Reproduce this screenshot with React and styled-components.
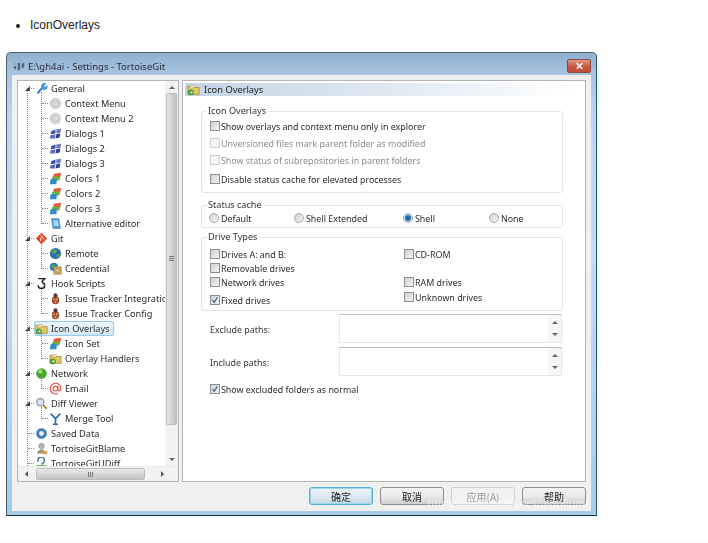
import styled, { createGlobalStyle } from "styled-components";

const GlobalStyle = createGlobalStyle`
    html, body {
        margin: 0;
        background: #ffffff;
    }
`

const UI_FONT = `"Noto Sans", Tahoma, sans-serif`;
const CJK_FONT = `"Noto Sans CJK SC", "Liberation Sans", sans-serif`;

function Icon({ name }) {
    const shapes = {
        wrench: <>
            <path d="M3 14 L9 7" stroke="#2f7fd0" strokeWidth="2.6" />
            <path d="M8 7 A4 4 0 0 1 14 2 L11 5 L12 6 L15 4 A4 4 0 0 1 9 9 Z" fill="#3f9ae6" />
        </>,
        gear: <>
            <circle cx="8" cy="8" r="6.5" fill="#dcdcdc" stroke="#a9a9a9" strokeDasharray="2 1" />
            <circle cx="8" cy="8" r="3.5" fill="#f4f4f4" stroke="#a0a0a0" />
            <circle cx="8" cy="8" r="1.4" fill="#c4c4c4" />
        </>,
        windows: <>
            <path d="M3 5 L8 3 L8 8 L2 9 Z" fill="#3d4fa8" />
            <path d="M9 3 L15 2 L14 7 L9 8 Z" fill="#6a76c6" />
            <path d="M2 10 L8 9 L7 14 L1 14 Z" fill="#5a68bc" />
            <path d="M9 9 L14 8 L13 13 L8 14 Z" fill="#2e3d92" />
        </>,
        colors: <>
            <path d="M6 2 L15 1 L14 6 L5 7 Z" fill="#e8593a" />
            <path d="M4 6 L14 5 L13 10 L3 11 Z" fill="#6fb23f" />
            <path d="M2 9 L10 8 L9 15 L1 15 Z" fill="#2f8fc4" />
        </>,
        editor: <>
            <path d="M3 2 H12 L14 14 H5 Z" fill="#4d9ddc" stroke="#2e6ea8" strokeWidth="0.7" />
            <path d="M5 4 H11 L12 11 H6 Z" fill="#a9d6f4" />
        </>,
        git: <>
            <path d="M8 1 L15 8 L8 15 L1 8 Z" fill="#e8492e" />
            <path d="M7 4 L11 9 M7 7 V11" stroke="#fff" strokeWidth="1.2" />
        </>,
        globe: <>
            <circle cx="8" cy="8" r="6.8" fill="#2b6cb3" />
            <path d="M3 5 Q7 2 10 4 L8 8 L5 8 Z M9 10 L13 8 L13 12 L10 13 Z" fill="#55ac4a" />
        </>,
        credential: <>
            <circle cx="6" cy="6" r="5" fill="#2b7cbc" />
            <path d="M3 4 L7 3 L7 7 L4 7 Z" fill="#55ac4a" />
            <rect x="6" y="6" width="9" height="9" fill="#c6a85f" stroke="#937637" strokeWidth="0.7" />
            <circle cx="10.5" cy="10.5" r="2" fill="#e7d8a8" stroke="#8a6f34" strokeWidth="0.6" />
        </>,
        hook: <>
            <path d="M4 2 H12 L9 5 V7" fill="none" stroke="#222" strokeWidth="1.8" />
            <path d="M9 7 C13 8 13 14 8 14 C5 14 4 12 4 10" fill="none" stroke="#222" strokeWidth="1.8" />
        </>,
        bug: <>
            <ellipse cx="8" cy="10" rx="4.5" ry="5" fill="#a8502e" />
            <circle cx="8" cy="4" r="2.4" fill="#54342a" />
            <circle cx="6.3" cy="9" r="1" fill="#e6c9a4" />
            <circle cx="9.7" cy="9" r="1" fill="#e6c9a4" />
            <circle cx="8" cy="12.3" r="1" fill="#e6c9a4" />
        </>,
        overlay: <>
            <path d="M1 4 H6 L7.5 5.5 H15 V14 H1 Z" fill="#e3c65c" stroke="#98813a" strokeWidth="0.8" />
            <path d="M4 3 H9 V6 H4 Z" fill="#f6edc6" stroke="#a9955a" strokeWidth="0.5" />
            <circle cx="4.8" cy="11.5" r="3.6" fill="#3f9d33" />
            <path d="M3 11.5 H6.5 M5.2 10 L6.8 11.5 L5.2 13" fill="none" stroke="#fff" strokeWidth="0.9" />
        </>,
        network: <>
            <circle cx="8" cy="8" r="6.5" fill="#46a82f" />
            <circle cx="6.5" cy="5.5" r="2.6" fill="#9ade78" />
        </>,
        email: <>
            <circle cx="8" cy="8" r="3" fill="none" stroke="#e4554c" strokeWidth="1.4" />
            <path d="M11 5 V9.5 Q11 11 12.6 11 Q14.5 10.5 14.5 8 A6.5 6.5 0 1 0 11 13.8" fill="none" stroke="#e4554c" strokeWidth="1.4" />
        </>,
        magnifier: <>
            <circle cx="6.5" cy="6.5" r="4.5" fill="#d6e4f0" stroke="#8a8f96" strokeWidth="1.4" />
            <path d="M10 10 L14.5 14.5" stroke="#b8862e" strokeWidth="2.4" />
        </>,
        merge: <>
            <path d="M2 2 L8 8 L14 2 M8 8 V15 M5 15 H11" fill="none" stroke="#2a68ae" strokeWidth="2" />
        </>,
        saved: <>
            <circle cx="8" cy="8" r="6.5" fill="#3e7fb8" stroke="#8fa6ba" strokeDasharray="2 1" />
            <circle cx="8" cy="8" r="3" fill="#e8f0f6" />
        </>,
        blame: <>
            <circle cx="8" cy="5" r="3.4" fill="#b6b6a8" stroke="#7c7c70" strokeWidth="0.6" />
            <path d="M2 14 Q8 4 14 14 Z" fill="#8f9a7a" />
            <path d="M9 11 H15 V15 H9 Z" fill="#d8a04e" />
        </>,
        udiff: <>
            <path d="M4 6 A4 4 0 1 1 11 6 Q10 8 8 9" fill="none" stroke="#2e6ea8" strokeWidth="1.6" />
            <path d="M2 11 H14 M2 14 H14" stroke="#3a9a3a" strokeWidth="1.6" />
        </>,
        app: <>
            <path d="M1 9 L5 7 L5 12 Z M7 4 L10 3 L10 12 L7 13 Z M12 5 L15 3 L15 9 L12 10 Z" fill="#54616e" />
            <circle cx="4" cy="5" r="1.5" fill="#8aa0b4" />
        </>,
    };
    return <IconSvg viewBox="0 0 16 16">{shapes[name]}</IconSvg>;
}

const treeItems = [
    { label: "General", icon: "wrench", open: true, children: [
        { label: "Context Menu", icon: "gear" },
        { label: "Context Menu 2", icon: "gear" },
        { label: "Dialogs 1", icon: "windows" },
        { label: "Dialogs 2", icon: "windows" },
        { label: "Dialogs 3", icon: "windows" },
        { label: "Colors 1", icon: "colors" },
        { label: "Colors 2", icon: "colors" },
        { label: "Colors 3", icon: "colors" },
        { label: "Alternative editor", icon: "editor" },
    ]},
    { label: "Git", icon: "git", open: true, children: [
        { label: "Remote", icon: "globe" },
        { label: "Credential", icon: "credential" },
    ]},
    { label: "Hook Scripts", icon: "hook", open: true, children: [
        { label: "Issue Tracker Integration", icon: "bug" },
        { label: "Issue Tracker Config", icon: "bug" },
    ]},
    { label: "Icon Overlays", icon: "overlay", open: true, selected: true, children: [
        { label: "Icon Set", icon: "colors" },
        { label: "Overlay Handlers", icon: "overlay" },
    ]},
    { label: "Network", icon: "network", open: true, children: [
        { label: "Email", icon: "email" },
    ]},
    { label: "Diff Viewer", icon: "magnifier", open: true, children: [
        { label: "Merge Tool", icon: "merge" },
    ]},
    { label: "Saved Data", icon: "saved" },
    { label: "TortoiseGitBlame", icon: "blame" },
    { label: "TortoiseGitUDiff", icon: "udiff" },
];

function Tree() {
    return (
        <TreeScroll>
            <TreeList>
                {treeItems.map((item) => (
                    <div key={item.label}>
                        <RootRow>
                            {item.open && <Expander />}
                            <RowBody $selected={item.selected}>
                                <Icon name={item.icon} />
                                <span>{item.label}</span>
                            </RowBody>
                        </RootRow>
                        {item.children && (
                            <ChildGroup>
                                {item.children.map((child) => (
                                    <ChildRow key={child.label}>
                                        <Icon name={child.icon} />
                                        <span>{child.label}</span>
                                    </ChildRow>
                                ))}
                            </ChildGroup>
                        )}
                    </div>
                ))}
            </TreeList>
            <VScroll>
                <Arrow $dir="up" />
                <VThumb><Grip $vertical /></VThumb>
                <Arrow $dir="down" />
            </VScroll>
            <HScroll>
                <Arrow $dir="left" />
                <HThumb><Grip /></HThumb>
                <Arrow $dir="right" />
            </HScroll>
        </TreeScroll>
    );
}

function Option({ children, checked, disabled, radio, ...rest }) {
    return (
        <OptionRow $disabled={disabled} {...rest}>
            {radio ? <RadioMark $checked={checked} /> : (
                <CheckMark $disabled={disabled}>
                    {checked && (
                        <svg viewBox="0 0 10 10" width="8" height="8">
                            <path d="M2 5 L4 8 L8 1.5" fill="none" stroke="#3e5a9c" strokeWidth="1.5" />
                        </svg>
                    )}
                </CheckMark>
            )}
            <span>{children}</span>
        </OptionRow>
    );
}

function PathRow({ label }) {
    return (
        <PathLine>
            <PathLabel>{label}</PathLabel>
            <PathBox>
                <PathSpin>
                    <Arrow $dir="up" />
                    <Arrow $dir="down" />
                </PathSpin>
            </PathBox>
        </PathLine>
    );
}

export default function App() {
    return (
        <>
            <GlobalStyle />
            <Page>
                <Bullets><li>IconOverlays</li></Bullets>
                <Window>
                    <TitleBar>
                        <Icon name="app" />
                        <TitleText>E:\gh4ai - Settings - TortoiseGit</TitleText>
                        <CloseButton>
                            <svg viewBox="0 0 10 10" width="9" height="8">
                                <path d="M1.5 1.5 L8.5 8.5 M8.5 1.5 L1.5 8.5" stroke="#fff" strokeWidth="2" />
                            </svg>
                        </CloseButton>
                    </TitleBar>
                    <Client>
                        <Panes>
                            <TreePanel><Tree /></TreePanel>
                            <SettingsPanel>
                                <PanelHeader>
                                    <Icon name="overlay" />
                                    <span>Icon Overlays</span>
                                </PanelHeader>
                                <Group $height={82} $top={15}>
                                    <Legend>Icon Overlays</Legend>
                                    <OverlayOptions>
                                        <Option>Show overlays and context menu only in explorer</Option>
                                        <Option disabled>Unversioned files mark parent folder as modified</Option>
                                        <Option disabled>Show status of subrepositories in parent folders</Option>
                                        <Option $lift={2}>Disable status cache for elevated processes</Option>
                                    </OverlayOptions>
                                </Group>
                                <Group $height={23} $top={12}>
                                    <Legend>Status cache</Legend>
                                    <RadioRow>
                                        <RadioCell $w={85}><Option radio>Default</Option></RadioCell>
                                        <RadioCell $w={109}><Option radio>Shell Extended</Option></RadioCell>
                                        <RadioCell $w={86}><Option radio checked>Shell</Option></RadioCell>
                                        <RadioCell $w={60}><Option radio>None</Option></RadioCell>
                                    </RadioRow>
                                </Group>
                                <Group $height={74} $top={9}>
                                    <Legend>Drive Types</Legend>
                                    <DriveColumns>
                                        <DriveColumn>
                                            <Option>Drives A: and B:</Option>
                                            <Option>Removable drives</Option>
                                            <Option>Network drives</Option>
                                            <Option $lift={4} checked>Fixed drives</Option>
                                        </DriveColumn>
                                        <DriveColumn>
                                            <Option>CD-ROM</Option>
                                            <Option $lift={14}>RAM drives</Option>
                                            <Option $lift={1}>Unknown drives</Option>
                                        </DriveColumn>
                                    </DriveColumns>
                                </Group>
                                <PathRow label="Exclude paths:" />
                                <PathRow label="Include paths:" />
                                <ExcludedOption><Option checked>Show excluded folders as normal</Option></ExcludedOption>
                            </SettingsPanel>
                        </Panes>
                        <ButtonBar>
                            <DialogButton $primary>确定</DialogButton>
                            <DialogButton>取消</DialogButton>
                            <DialogButton $disabled>应用(A)</DialogButton>
                            <DialogButton>帮助</DialogButton>
                        </ButtonBar>
                        <Watermark>https://blog.csdn.net/qianlium/</Watermark>
                    </Client>
                </Window>
            </Page>
        </>
    );
}

const Page = styled.div`
    width: 708px;
    height: 543px;
    overflow: hidden;
    background: linear-gradient(#ffffff 540px, #fafafa 540px);
`

const Bullets = styled.ul`
    margin: 0;
    padding: 17px 0 0 30px;
    height: 52px;
    box-sizing: border-box;
    font: 12px/16px "Liberation Sans", Arial, sans-serif;
    color: #222;
`

const Window = styled.div`
    margin-left: 6px;
    width: 591px;
    height: 464px;
    box-sizing: border-box;
    padding: 0 5px 5px 5px;
    border: 1px solid #4e6070;
    border-bottom-color: #10364a;
    border-right-color: #1f5a70;
    border-radius: 5px 5px 0 0;
    background: linear-gradient(#8fb0d0 0, #a9c4e0 22px, #bcd5ec 60px, #c4dcf2 200px, #a8cbe8 100%);
    filter: blur(0.35px);
`

const TitleBar = styled.div`
    height: 22px;
    display: flex;
    align-items: center;
    gap: 3px;
    padding-top: 4px;
    box-sizing: border-box;
    font: 9.5px ${UI_FONT};
    color: #2a2a3a;
`

const TitleText = styled.span`
    flex: 1;
`

const CloseButton = styled.div`
    width: 24px;
    height: 14px;
    display: flex;
    align-items: center;
    justify-content: center;
    border: 1px solid #8d4a40;
    box-sizing: border-box;
    border-radius: 2px;
    background: linear-gradient(#e09a88, #cf5a48 50%, #c24a3a);
`

const Client = styled.div`
    position: relative;
    height: 436px;
    box-sizing: border-box;
    padding: 5px 5px 0 5px;
    background: #f0f0f0;
    font: 8.9px ${UI_FONT};
    color: #2c2c2c;
`

const Panes = styled.div`
    display: flex;
    gap: 3px;
    height: 402px;
`

const TreePanel = styled.div`
    width: 162px;
    flex: none;
    box-sizing: border-box;
    border: 1px solid #b4b4b4;
    background: #fff;
    font-size: 9.2px;
`

const TreeScroll = styled.div`
    display: grid;
    grid-template-columns: 147px 13px;
    grid-template-rows: 385px 15px;
    height: 100%;
    box-sizing: border-box;
`

const TreeList = styled.div`
    position: relative;
    overflow: hidden;
    padding-left: 0;

    &::before {
        content: "";
        position: absolute;
        left: 9px;
        top: 7px;
        bottom: 0;
        border-left: 1px dotted #888;
    }
`

const RootRow = styled.div`
    position: relative;
    height: 15px;
    padding-left: 16px;
    display: flex;
    align-items: center;

    &::before {
        content: "";
        position: absolute;
        left: 10px;
        width: 6px;
        top: 7px;
        border-top: 1px dotted #888;
    }
`

const RowBody = styled.div`
    position: relative;
    display: flex;
    align-items: center;
    gap: 3px;
    height: 15px;
    padding: 0 4px 0 1px;
    box-sizing: border-box;
    white-space: nowrap;
    ${(props) => props.$selected && `
        background: linear-gradient(#eef6fd, #d2e6f9);
        box-shadow: inset 0 0 0 1px #9cc8ee;
        border-radius: 3px;
    `}
`

const Expander = styled.span`
    position: absolute;
    z-index: 1;
    left: 7px;
    top: 5px;
    width: 0;
    height: 0;
    border-style: solid;
    border-width: 0 0 5px 5px;
    border-color: transparent transparent #444 transparent;
`

const ChildGroup = styled.div`
    position: relative;

    &::before {
        content: "";
        position: absolute;
        left: 23px;
        top: -4px;
        bottom: 7px;
        border-left: 1px dotted #888;
    }
`

const ChildRow = styled.div`
    position: relative;
    height: 15px;
    padding-left: 31px;
    display: flex;
    align-items: center;
    gap: 3px;
    white-space: nowrap;

    &::before {
        content: "";
        position: absolute;
        left: 24px;
        width: 6px;
        top: 7px;
        border-top: 1px dotted #888;
    }
`

const IconSvg = styled.svg`
    width: 13px;
    height: 13px;
    flex: none;
`

const ScrollBase = styled.div`
    display: flex;
    align-items: center;
    justify-content: space-between;
    background: #f2f2f2;
`

const VScroll = styled(ScrollBase)`
    flex-direction: column;
    padding: 2px 0 2px;
`

const HScroll = styled(ScrollBase)`
    grid-column: 1 / span 2;
    padding: 0 4px;
    justify-content: flex-start;
    gap: 0;
    border-top: 1px solid #e8e8e8;
`

const VThumb = styled.div`
    width: 11px;
    flex: none;
    height: 332px;
    margin-bottom: 30px;
    display: flex;
    align-items: center;
    justify-content: center;
    border: 1px solid #bcbcbc;
    box-sizing: border-box;
    border-radius: 2px;
    background: linear-gradient(90deg, #e8e8e8, #d2d2d2 50%, #c2c2c2);
`

const HThumb = styled.div`
    width: 109px;
    height: 12px;
    margin: 0 13px 0 5px;
    display: flex;
    align-items: center;
    justify-content: center;
    border: 1px solid #bcbcbc;
    box-sizing: border-box;
    border-radius: 2px;
    background: linear-gradient(#e8e8e8, #d8d8d8 50%, #c2c2c2);
`

const Grip = styled.div`
    ${(props) => props.$vertical ? `
        width: 5px;
        height: 5px;
        background: repeating-linear-gradient(#777 0 1px, transparent 1px 2px);
    ` : `
        width: 5px;
        height: 5px;
        background: repeating-linear-gradient(90deg, #777 0 1px, transparent 1px 2px);
    `}
`

const arrowBorders = {
    up: "border-width: 0 3px 3px; border-color: transparent transparent #666;",
    down: "border-width: 3px 3px 0; border-color: #666 transparent transparent;",
    left: "border-width: 3px 3px 3px 0; border-color: transparent #555 transparent transparent;",
    right: "border-width: 3px 0 3px 3px; border-color: transparent transparent transparent #555;",
};

const Arrow = styled.span`
    flex: none;
    width: 0;
    height: 0;
    border-style: solid;
    margin: 3px;
    ${(props) => arrowBorders[props.$dir]}
`

const SettingsPanel = styled.div`
    flex: 1;
    min-width: 0;
    box-sizing: border-box;
    border: 1px solid #b4b4b4;
    background: #fff;
    padding: 2px 1px 0 2px;
`

const PanelHeader = styled.div`
    height: 13px;
    display: flex;
    align-items: center;
    gap: 4px;
    padding-left: 2px;
    margin-bottom: 0;
    background: linear-gradient(90deg, #c4d4e6, #d8e4ef 40%, #ffffff 98%);
    color: #222;
    font-size: 9.3px;
`

const Group = styled.div`
    position: relative;
    box-sizing: border-box;
    width: 362px;
    height: ${(props) => props.$height}px;
    margin: ${(props) => props.$top}px 0 0 16px;
    border: 1px solid #dbe5ee;
    border-radius: 3px;
`

const Legend = styled.div`
    position: absolute;
    left: 5px;
    top: -7px;
    padding: 0 2px 0 1px;
    background: #fff;
    color: #333;
    line-height: 12px;
    font-size: 9.1px;
`

const OverlayOptions = styled.div`
    display: flex;
    flex-direction: column;
    gap: 5px;
    padding: 8px 0 0 8px;
`

const OptionRow = styled.div`
    display: flex;
    align-items: center;
    gap: 1px;
    height: 12px;
    margin-top: ${(props) => props.$lift || 0}px;
    white-space: nowrap;
    color: ${(props) => props.$disabled ? "#8c8c8c" : "#2c2c2c"};
`

const CheckMark = styled.span`
    width: 10px;
    height: 10px;
    flex: none;
    box-sizing: border-box;
    display: flex;
    align-items: center;
    justify-content: center;
    border: 1px solid ${(props) => props.$disabled ? "#cfcfcf" : "#8e8f8f"};
    background: ${(props) => props.$disabled ? "#f4f4f4" : "linear-gradient(135deg, #d2d2d2, #f2f2f2)"};
`

const RadioMark = styled.span`
    width: 10px;
    height: 10px;
    flex: none;
    margin-right: 1px;
    box-sizing: border-box;
    border-radius: 50%;
    border: 1px solid #a8a8a8;
    background: ${(props) => props.$checked
        ? "radial-gradient(circle, #1c6fa8 0 2.5px, #cfe2ee 3.5px)"
        : "linear-gradient(135deg, #cfcfcf, #f6f6f6)"};
`

const RadioRow = styled.div`
    display: flex;
    padding: 6px 0 0 7px;
`

const RadioCell = styled.div`
    width: ${(props) => props.$w}px;
    flex: none;
`

const DriveColumns = styled.div`
    display: flex;
    padding: 10px 0 0 8px;
`

const DriveColumn = styled.div`
    width: 150px;
    display: flex;
    flex-direction: column;
    gap: 2px;

    &:first-child {
        width: 194px;
        flex: none;
    }
`

const PathLine = styled.div`
    display: flex;
    align-items: center;
    height: 29px;
    margin: 3px 0 0 16px;

    & + & {
        margin-top: 4px;
    }
`

const PathLabel = styled.div`
    width: 138px;
    flex: none;
    padding: 2px 0 0 9px;
    box-sizing: border-box;
    color: #333;
`

const PathBox = styled.div`
    width: 223px;
    height: 29px;
    flex: none;
    display: flex;
    justify-content: flex-end;
    box-sizing: border-box;
    border: 1px solid #e2e8ee;
    border-top-color: #bcbcbc;
`

const PathSpin = styled.div`
    width: 13px;
    display: flex;
    flex-direction: column;
    align-items: center;
    justify-content: space-between;
    padding: 3px 0;
    background: #f6f6f6;
`

const ExcludedOption = styled.div`
    margin: 7px 0 0 25px;
`

const ButtonBar = styled.div`
    display: flex;
    justify-content: flex-end;
    gap: 7px;
    padding: 5px 0 0;
`

const DialogButton = styled.div`
    width: 64px;
    height: 18px;
    display: flex;
    align-items: center;
    justify-content: center;
    box-sizing: border-box;
    border-radius: 3px;
    font: 10px ${CJK_FONT};
    color: ${(props) => props.$disabled ? "#9a9a9a" : "#222"};
    border: 1px solid ${(props) => props.$primary ? "#4fb2de" : props.$disabled ? "#cfcfcf" : "#8e8e8e"};
    background: ${(props) => props.$primary
        ? "linear-gradient(#eef6fb, #dfeaf2 50%, #c4d8e4)"
        : props.$disabled
            ? "#f2f2f2"
            : "linear-gradient(#f4f4f4, #ebebeb 50%, #cfcfcf)"};
    box-shadow: ${(props) => props.$primary ? "0 0 0 1px #9ad4ee inset" : "none"};
`

const Watermark = styled.div`
    position: absolute;
    right: 2px;
    bottom: 2px;
    font: 11.5px "Liberation Sans", Arial, sans-serif;
    letter-spacing: 0.3px;
    color: rgba(255, 255, 255, 0.55);
    white-space: nowrap;
`
